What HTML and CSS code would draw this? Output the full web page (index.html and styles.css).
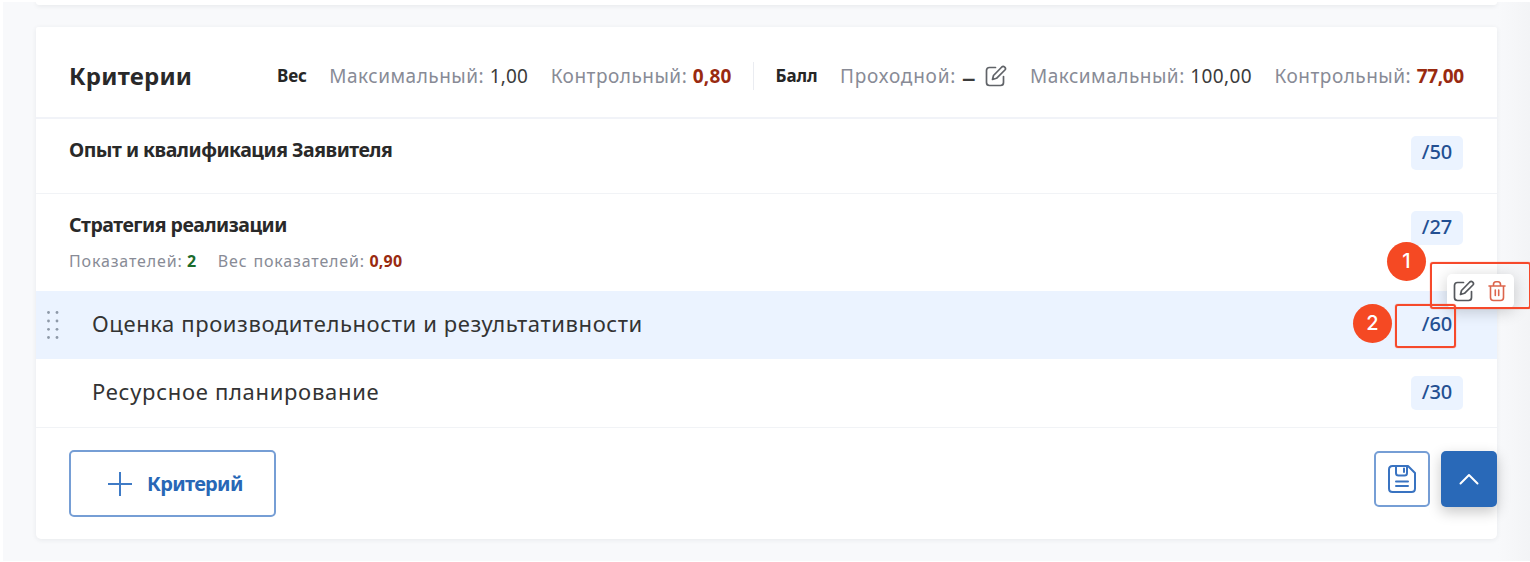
FILE: index.html
```html
<!DOCTYPE html>
<html lang="ru">
<head>
<meta charset="utf-8">
<title>Критерии</title>
<link rel="stylesheet" href="styles.css">
</head>
<body>
<svg class="defs" width="0" height="0">
  <symbol id="edit" viewBox="0 0 22 22"><path d="M10.5 2.5H4.5Q1.5 2.5 1.5 5.500V17.500Q1.500 20.500 4.500 20.500H15.500Q18.500 20.500 18.500 17.500V11.500M7.500 14.500L8.500 10.500L16.800 2Q18.200 .8 19.700 2.200Q21.200 3.600 19.900 5L11.500 13.300Z" fill="none" stroke="currentColor" stroke-width="1.7" stroke-linejoin="round" stroke-linecap="round"/></symbol>
  <symbol id="trash" viewBox="0 0 18 22"><path d="M1 6H17M5.500 6V4.500Q5.500 1.800 8 1.800H10Q12.500 1.800 12.500 4.500V6M2.500 6V17.500Q2.500 20.500 5.500 20.500H12.500Q15.500 20.500 15.500 17.500V6M7.300 10V15.500M10.700 10V15.500" fill="none" stroke="currentColor" stroke-width="1.6" stroke-linecap="round"/></symbol>
</svg>
<div class="page">
  <div class="prev-card"></div>
  <main class="card">
    <header class="head">
      <h1 class="title">Критерии</h1>
      <div class="group">
        <b class="name">Вес</b>
        <div class="stat"><span class="label">Максимальный:</span><span class="value">1,00</span></div>
        <div class="stat"><span class="label">Контрольный:</span><span class="value bad">0,80</span></div>
      </div>
      <div class="group second">
        <b class="name">Балл</b>
        <div class="stat"><span class="label pass">Проходной:</span><span class="value dash">–</span><svg class="edit" width="22" height="22"><use href="#edit"/></svg></div>
        <div class="stat"><span class="label">Максимальный:</span><span class="value wide">100,00</span></div>
        <div class="stat"><span class="label">Контрольный:</span><span class="value bad tight">77,00</span></div>
      </div>
    </header>
    <section class="row first"><h2 class="crit">Опыт и квалификация Заявителя</h2><span class="chip">/50</span></section>
    <section class="row parent">
      <div>
        <h2 class="crit">Стратегия реализации</h2>
        <div class="meta"><span class="mlabel">Показателей:</span><b class="good">2</b><span class="mlabel second-label">Вес показателей:</span><b class="bad">0,90</b></div>
      </div>
      <span class="chip">/27</span>
    </section>
    <section class="row child active">
      <svg class="grip" width="14" height="30" fill="#8e99a8"><circle cx="2.500" cy="2.500" r="1.400"/><circle cx="11" cy="2.500" r="1.400"/><circle cx="2.500" cy="11" r="1.400"/><circle cx="11" cy="11" r="1.400"/><circle cx="2.500" cy="19.300" r="1.400"/><circle cx="11" cy="19.300" r="1.400"/><circle cx="2.500" cy="27.500" r="1.400"/><circle cx="11" cy="27.500" r="1.400"/></svg>
      <span class="sub">Оценка производительности и результативности</span><span class="chip">/60</span>
    </section>
    <section class="row child last"><span class="sub">Ресурсное планирование</span><span class="chip">/30</span></section>
    <footer class="foot">
      <button class="add"><svg width="24" height="24"><path d="M12 0V24M0 12H24" stroke="#3f7bc6" stroke-width="2"/></svg><span>Критерий</span></button>
      <div class="actions">
        <button class="save"><svg width="28" height="28" viewBox="0 0 28 28" fill="none" stroke="#3973c1" stroke-width="2"><path d="M4.500 1H20L27 8V23.500Q27 27 23.500 27H4.500Q1 27 1 23.500V4.500Q1 1 4.500 1Z" stroke-linejoin="round"/><path d="M8 1V8Q8 10.500 10.500 10.500H16.500Q19 10.500 19 8V1M16 3.500V7M8 16.500H20M8 21H20" stroke-linecap="round"/></svg></button>
        <button class="up"><svg width="20" height="12"><path d="M1.500 10.500L10 2L18.500 10.500" fill="none" stroke="#fff" stroke-width="2" stroke-linecap="round" stroke-linejoin="round"/></svg></button>
      </div>
    </footer>
  </main>
  <div class="tools"><svg width="22" height="22"><use href="#edit"/></svg><svg class="del" width="18" height="22"><use href="#trash"/></svg></div>
  <div class="frame frame-one"></div>
  <div class="frame frame-two"></div>
  <div class="pin pin-one">1</div>
  <div class="pin pin-two">2</div>
</div>
</body>
</html>
```
FILE: styles.css
```css
* { box-sizing: border-box; }
body { margin: 0; background: #fff; font-family: "Noto Sans", sans-serif; color: #333; overflow: hidden; }
h1, h2 { margin: 0; }
.defs { position: absolute; }
.page { position: relative; margin: 2px 0 0 3px; width: 1527px; height: 559px; padding: 0 33px; background: linear-gradient(90deg, #f8f9fb 1495px, #f3f4f6 1527px); overflow: hidden; }
.prev-card { height: 3px; background: #fff; border-radius: 0 0 5px 5px; box-shadow: 0 1px 4px rgba(40, 50, 60, .1); }
.card { margin-top: 22px; height: 512px; background: #fff; border-radius: 2px 2px 5px 5px; box-shadow: 0 1px 5px rgba(40, 50, 60, .08); }
.head { display: flex; align-items: center; height: 92px; padding: 8px 33px 0 33px; border-bottom: 2px solid #f1f3f8; white-space: nowrap; }
.title { flex: none; width: 208px; font-size: 24px; line-height: 34px; font-weight: 700; letter-spacing: .2px; color: #292929; }
.group { display: flex; align-items: center; height: 28px; gap: 22.5px; font-size: 19px; line-height: 28px; }
.group.second { margin-left: 21px; padding-left: 22px; border-left: 1px solid #eaecf1; }
.name { font-size: 17px; letter-spacing: -.1px; color: #262626; }
.stat { display: flex; align-items: center; gap: 5.5px; }
.label { letter-spacing: .5px; color: #888b96; }
.pass { letter-spacing: .8px; }
.value { letter-spacing: .2px; color: #3b3b3b; }
.wide { letter-spacing: .4px; }
.dash { font-size: 28px; }
.bad { color: #992a10; font-weight: 700; letter-spacing: .2px; }
.tight { letter-spacing: -.35px; }
.edit { margin-left: 4px; color: #606368; }
.row { display: flex; justify-content: space-between; align-items: flex-start; padding: 17px 34px 0 33px; white-space: nowrap; }
.first { height: 75px; border-bottom: 1px solid #f1f3f6; }
.parent { height: 97px; }
.crit { font-size: 19.5px; line-height: 28px; font-weight: 700; letter-spacing: -.5px; color: #292929; }
.chip { width: 52px; height: 34px; border-radius: 5px; background: #ebf3ff; color: #234f92; text-align: center; font-size: 20px; line-height: 32px; font-weight: 500; }
.meta { display: flex; gap: 4.5px; margin-top: 10px; font-size: 16px; line-height: 24px; color: #888b96; }
.mlabel { letter-spacing: .85px; }
.second-label { margin-left: 17px; word-spacing: 1px; }
.good { color: #1b6b2b; }
.child { height: 68px; padding-left: 56px; position: relative; }
.active { background: #ebf3ff; }
.last { border-bottom: 1px solid #f1f3f6; height: 69px; }
.grip { position: absolute; left: 10px; top: 19px; }
.sub { margin-top: -1px; font-size: 22px; line-height: 32px; letter-spacing: .6px; color: #333; }
.last .sub { letter-spacing: .7px; }
.foot { display: flex; justify-content: space-between; align-items: flex-start; padding: 22px 0 0 33px; }
button { display: flex; align-items: center; justify-content: center; margin: 0; padding: 0; font-family: inherit; background: #fff; border: 2px solid #769ed5; border-radius: 5px; }
.add { width: 207px; height: 67px; justify-content: flex-start; padding-left: 37px; gap: 15px; color: #2867b6; font-size: 20px; font-weight: 700; letter-spacing: -.7px; }
.actions { display: flex; gap: 11px; margin-top: 1px; }
.save { width: 56px; height: 56px; }
.up { width: 56px; height: 56px; background: #2969b8; border: 0; box-shadow: 0 5px 14px rgba(0, 0, 0, .22); }
.tools { position: absolute; left: 1444px; top: 272px; width: 67px; height: 34px; padding-left: 6px; display: flex; align-items: center; gap: 13px; background: #fff; border-radius: 5px; box-shadow: 0 3px 16px rgba(0, 0, 0, .2); color: #55585d; }
.del { color: #dc654c; }
.frame { position: absolute; border: 2px solid #f6492b; border-radius: 3px; box-shadow: 0 0 1px #f6492b; }
.frame-one { left: 1427px; top: 260px; width: 101px; height: 47px; }
.frame-two { left: 1392px; top: 302px; width: 61px; height: 44px; }
.pin { position: absolute; width: 39px; height: 39px; border-radius: 50%; background: #f54923; color: #fff; font-family: Inter, sans-serif; font-size: 20px; line-height: 39px; text-align: center; font-weight: 500; }
.pin-one { left: 1384px; top: 240px; }
.pin-two { left: 1350px; top: 302px; }
```
